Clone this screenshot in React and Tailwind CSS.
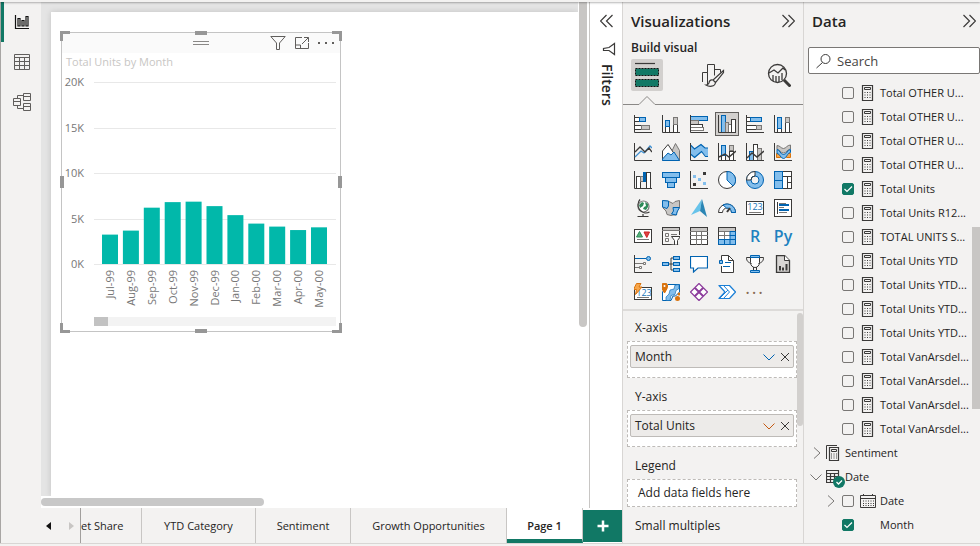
import React from "react";

const DARK = "#3b3a39";
const BLUE = "#0063b1";
const SKY = "#83beec";
const GRAY = "#797775";
const SILVER = "#c8c6c4";

function Icon({ children, size = "size-[18px]", box = "0 0 18 18" }) {
  return (
    <svg className={`${size} shrink-0`} viewBox={box} fill="none" stroke={DARK} strokeWidth="1" aria-hidden="true">
      {children}
    </svg>
  );
}

function Box({ x, y, w, h, f = "#fff", s = DARK }) {
  return <rect x={x + 0.5} y={y + 0.5} width={w} height={h} fill={f} stroke={s} />;
}

const Axis = () => <path d="M.5 0V17.5H18" />;

const visuals = [
  ["Stacked bar chart", <><Axis /><Box x={0} y={2} w={5} h={4} /><Box x={5} y={2} w={6} h={4} f={SKY} s={BLUE} /><Box x={0} y={10} w={7} h={4} /><Box x={7} y={10} w={8} h={4} f={SILVER} s={GRAY} /></>],
  ["Stacked column chart", <><Axis /><Box x={3} y={11} w={4} h={6} /><Box x={3} y={5} w={4} h={6} f={SKY} s={BLUE} /><Box x={11} y={7} w={4} h={10} /><Box x={11} y={2} w={4} h={7} f={SILVER} s={GRAY} /></>],
  ["Clustered bar chart", <><Box x={0} y={1} w={17} h={4} f={SKY} s={BLUE} /><Box x={0} y={5} w={8} h={4} f={SILVER} s={GRAY} /><Box x={0} y={9} w={12} h={3} /><Box x={0} y={12} w={13} h={3} s={GRAY} /><Axis /></>],
  ["Clustered column chart", <><Box x={3} y={0} w={4} h={17} f={SKY} s={BLUE} /><Box x={7} y={7} w={3} h={10} f={SILVER} s={GRAY} /><Box x={10} y={9} w={3} h={8} s={GRAY} /><Box x={13} y={4} w={4} h={13} /><Axis /></>],
  ["100% stacked bar chart", <><Axis /><Box x={0} y={2} w={4} h={4} /><Box x={4} y={2} w={11} h={4} f={SKY} s={BLUE} /><Box x={0} y={10} w={10} h={4} /><Box x={10} y={10} w={5} h={4} f={SILVER} s={GRAY} /></>],
  ["100% stacked column chart", <><Axis /><Box x={3} y={13} w={4} h={4} /><Box x={3} y={2} w={4} h={11} f={SKY} s={BLUE} /><Box x={11} y={7} w={4} h={10} /><Box x={11} y={2} w={4} h={5} f={SILVER} s={GRAY} /></>],
  ["Line chart", <><Axis /><path d="M1 14l6-6 3 2 6-7 2 2" stroke="#3f8fd0" strokeWidth="1.300" /><path d="M1 9l5-5 5 5 4-4 3 4" strokeWidth="1.300" /></>],
  ["Area chart", <><path d="M9 10l4.500-9.500 4 7v10z" fill={SILVER} stroke={GRAY} /><path d="M.5 17.500V8L6 1.500l6 9" fill="#fff" /><path d="M.5 17.500V16L6 10l3 2 3-3 5.500 8.500z" fill={SKY} stroke={BLUE} /></>],
  ["Stacked area chart", <><path d="M.5 2.500L4 6l7-5 4 4h3v8h-2l-4-4-7 6-4.500-4z" fill={SKY} stroke="none" /><path d="M.5 2l4 4L11 1.500l4 3.500h3M.5 11l4 3.500 7-6 4 5H18" stroke={BLUE} strokeWidth="1.200" /><Axis /></>],
  ["Line and stacked column chart", <><Axis /><Box x={3} y={10} w={4} h={7} /><Box x={3} y={2} w={4} h={10} f={SKY} s={BLUE} /><Box x={11} y={8} w={4} h={9} /><Box x={11} y={2} w={4} h={5} f={SILVER} s={GRAY} /><path d="M1 14l6-3 4 3 7-6" strokeWidth="1.400" /></>],
  ["Line and clustered column chart", <><Box x={3} y={8} w={4} h={9} f={SKY} s={BLUE} /><Box x={7} y={1} w={4} h={16} /><Box x={11} y={5} w={4} h={12} f={SILVER} s={GRAY} /><Axis /><path d="M1 15l5-5 5 4 7-6" strokeWidth="1.400" /></>],
  ["Ribbon chart", <><path d="M3 2.500c3 0 4 3 6.500 3S13 2 16.500 2v4c-3 0-4 4-7 4S6 6.500 3 6.500z" fill={SILVER} stroke={GRAY} /><path d="M2.500 10.500h4v4h-4zM12.500 10.500h4v4h-4z" fill="#f7a64a" stroke="#d9730d" /><path d="M3 6.500c3 0 3 5 6.500 5s4-5 7-5v3c-3 0-4 6-7 6s-3.500-5-6.500-5z" fill={SKY} stroke={BLUE} /><Axis /></>],
  ["Waterfall chart", <><Box x={2} y={5} w={4} h={12} /><Box x={6} y={5} w={3} h={5} f={SILVER} s={GRAY} /><Box x={9} y={1} w={2} h={9} f={BLUE} s={BLUE} /><Box x={12} y={1} w={4} h={16} /><Axis /></>],
  ["Funnel chart", <><Box x={0} y={1} w={17} h={5} f={SKY} s={BLUE} /><Box x={3} y={6} w={11} h={5} f={SKY} s={BLUE} /><Box x={5} y={11} w={7} h={5} f={SKY} s={BLUE} /></>],
  ["Scatter chart", <><Axis /><g stroke="none"><path d="M13 1h3v3h-3zM3 12h3v3H3z" fill={DARK} /><path d="M3 4h3v3H3zM8 7h3v3H8zM13 11h3v3h-3z" fill={SKY} /></g></>],
  ["Pie chart", <><circle cx="9" cy="9" r="8.500" fill="#fff" /><path d="M9 9V.5a8.500 8.500 0 016 14.500z" fill={SKY} stroke={BLUE} /></>],
  ["Donut chart", <><circle cx="9" cy="9" r="8.500" fill={SKY} stroke={BLUE} /><path d="M.5 9A8.500 8.500 0 019 .5V9z" fill="#fff" /><circle cx="9" cy="9" r="4" fill="#f3f2f1" stroke={BLUE} /><path d="M5 9a4 4 0 014-4" /></>],
  ["Treemap", <><Box x={8} y={0} w={9} h={5} /><Box x={8} y={5} w={5} h={12} /><Box x={13} y={5} w={4} h={6} /><Box x={13} y={11} w={4} h={6} /><Box x={0} y={0} w={8} h={9} f={SKY} s={BLUE} /><Box x={0} y={9} w={8} h={8} f={SKY} s={BLUE} /></>],
  ["Map", <><circle cx="9.500" cy="7.500" r="5.500" fill="#fff" stroke={GRAY} strokeWidth="1.200" /><path d="M5 6l3-3 2 1-1 3-3 2zM11 3l3 2v3l-2 3-3-1 1-2 2-1z" fill="#2d8a57" stroke="none" /><path d="M6 .5a8 8 0 009.500 12.500M9 15V17M3.500 17.500h11" strokeWidth="1.200" /></>],
  ["Filled map", <><path d="M1 1.500l6 1 4 2 2-2 4.500-1v7l-2 3-1.500 4.500h-3l-2 .5-4-1-1-3.500-3-3z" fill={SILVER} stroke={GRAY} /><path d="M.5 1.500L6.500 2v5L5 9.500.5 8zM11 8.500h6.500L15 13l-.5 3-5-1 2-3z" fill={SKY} stroke={BLUE} /></>],
  ["Azure map", <g stroke="none"><path d="M12 0L1 16l9-4z" fill="#67c3ea" /><path d="M12 0l5 18-7-6z" fill="#2b86b5" /></g>],
  ["Gauge", <><path d="M.5 13.500a8.500 8.500 0 0117 0h-4a4.500 4.500 0 00-9 0z" fill="#fff" /><path d="M5 6a8.500 8.500 0 0112.500 7.500h-4a4.500 4.500 0 00-5-4.500z" fill={SKY} stroke={BLUE} /><path d="M9 13l3-4" strokeWidth="2" /></>],
  ["Card", <><Box x={0} y={2} w={17} h={13} /><text x="9" y="11" fontSize="9" textAnchor="middle" fill="#1976b9" stroke="none">123</text><path d="M3 13.500h12" stroke={GRAY} /></>],
  ["Multi-row card", <><Box x={0} y={0} w={17} h={17} /><path d="M3.500 3v12" /><path d="M5 4.500h7M5 8.500h5M5 13.500h8" stroke={GRAY} /><path d="M5 6h10M5 11h10" stroke={BLUE} strokeWidth="2" /></>],
  ["KPI", <><Box x={0} y={2} w={17} h={13} /><path d="M2.500 10l3-5.500 3 5.500z" fill="#58b27a" stroke="#2d8a57" /><path d="M10 5h5.500l-2.700 5.500z" fill="#e04343" stroke="#c22" /><path d="M3 12.500h12" stroke={GRAY} /></>],
  ["Slicer", <><Box x={0} y={0} w={17} h={17} f="#f8f7f6" /><path d="M1 2h16" stroke={SILVER} strokeWidth="2" /><path d="M0 3.500h18" stroke={GRAY} /><path d="M3.500 6.500h3v3h-3zM3.500 11.500h3v3h-3zM9 7.500h6" stroke={GRAY} /><path d="M8 17V8h10v10z" fill="#f3f2f1" stroke="none" /><path d="M9.500 9.500h9l-3 4v4.500h-3V13.500z" fill="#fff" /></>],
  ["Table", <><Box x={0} y={0} w={17} h={17} /><path d="M1 2.500h16" stroke={SILVER} strokeWidth="3" /><path d="M0 4.500h18M0 8.500h18M0 12.500h18M6.500 4v14M11.500 4v14" stroke={GRAY} /></>],
  ["Matrix", <><Box x={0} y={0} w={17} h={17} /><path d="M1 2.500h16" stroke={SILVER} strokeWidth="3" /><path d="M1 4.500h16M1 8.500h11M6.500 4v9" stroke={GRAY} /><path d="M12 4.500h5.500v13H.5v-5h11.500z" fill={SKY} stroke={BLUE} /><path d="M6.500 13v5M12 13v5M12 8.500h6M12 12.500h6" stroke={BLUE} /><path d="M.5 0V12M0 .5h18M17.500 0v4" /></>],
  ["R script visual", "R"],
  ["Python visual", "Py"],
  ["Key influencers", <><Axis /><path d="M1 3.500h11" stroke={BLUE} /><circle cx="14.500" cy="3.500" r="2" fill={SKY} stroke={BLUE} /><path d="M1 8.500h8M1 12.500h4" stroke={GRAY} /><path d="M9.500 7.500h2v2h-2zM5.500 11.500h2v2h-2z" fill="#fff" stroke={GRAY} /></>],
  ["Decomposition tree", <><path d="M6 9h6M12 3H9v12h3" /><Box x={0} y={7} w={6} h={3} f={SKY} s={BLUE} /><Box x={11} y={1} w={6} h={3} f={SKY} s={BLUE} /><Box x={11} y={7} w={6} h={3} f={SKY} s={BLUE} /><Box x={11} y={13} w={6} h={3} f={SKY} s={BLUE} /></>],
  ["Q&A", <path d="M.5 1.500h17v11.500H8l-4.500 4V13H.5z" fill="#fff" stroke={BLUE} strokeWidth="1.200" />],
  ["Smart narrative", <><path d="M3.500 5V.5h7l5 5v12h-12V11" fill="#fff" /><path d="M10.500.5v5h5" /><path d="M1.500 5.500h3v3h-3z" fill={SKY} stroke={BLUE} /><path d="M7 7.500h6M5 11.500h7" stroke={BLUE} /></>],
  ["Goals", <><path d="M4.500 1.500h9v6a4.500 5 0 01-9 0z" fill="#fff" /><path d="M4.500 2.500h-4c0 4 2 5 5 6M13.500 2.500h4c0 4-2 5-5 6M7.500 12v3.500M10.500 12v3.500" /><path d="M4.500.5h9v2h-9zM4.500 15.500h9v2h-9z" fill={SKY} stroke={BLUE} /></>],
  ["Paginated report", <><path d="M2.500.5h8l5 5v12h-13z" fill="#d8d6d4" strokeWidth="1.300" /><path d="M10.500.5v5h5" fill="#fff" /><path d="M6 15.500V11M9 15.500v-3M12.500 15.500V9" strokeWidth="2" /></>],
  ["Card (new)", <><Box x={0} y={4} w={17} h={12} /><text x="10" y="13" fontSize="9" textAnchor="middle" fill="#1976b9" stroke="none">123</text><path d="M3 14.500h12" stroke={GRAY} /><path d="M2.500.5h4.500l-2 3.500h3l-6.500 7.500 1-5H-.5z" fill="#f7a64a" stroke="#d9730d" /></>],
  ["ArcGIS Maps", <><path d="M6 1.500h11.500V9l-4 4H11l-2 4.500H.5V9z" fill="#fff" stroke={BLUE} /><path d="M17 1.500v4l-3 2-1 4-4 1-1 5H4V14l3-3 1-4 4-1 1-4z" fill={SKY} stroke={BLUE} strokeWidth=".6" /><path d="M2.500 10C0 6-.5 5-.5 3a3 3 0 016 0c0 2-.5 3-3 7z" fill="#d9730d" stroke="#d9730d" /><circle cx="2.500" cy="3" r="1" fill="#fff" stroke="none" /><circle cx="15.500" cy="15.500" r="2.500" fill="#d9730d" stroke="none" /><circle cx="17" cy="11" r="1.500" fill="#d9730d" stroke="none" /></>],
  ["Power Apps", <g stroke="#8c3c9c" fill="#fff" strokeLinejoin="round"><path d="M9 .5L13 4.500 9 8.500 5 4.500zM4.500 5L8.500 9l-4 4-4-4zM13.500 5l4 4-4 4-4-4zM9 9.500l4 4-4 4-4-4z" strokeWidth="1.200" /></g>],
  ["Power Automate", <g stroke="#1b7fd6" strokeLinejoin="round"><path d="M1 2.500h10.500L17.500 9l-6 6.500H1L7 9z" fill="#fff" strokeWidth="1.200" /><path d="M5.500 2.500l6 6.500-6 6.500M10 7l-8 8" /></g>],
  ["Get more visuals", "..."],
];

const months = [
  ["Jul-99", 3230], ["Aug-99", 3670], ["Sep-99", 6190], ["Oct-99", 6800],
  ["Nov-99", 6850], ["Dec-99", 6360], ["Jan-00", 5370], ["Feb-00", 4440],
  ["Mar-00", 4110], ["Apr-00", 3730], ["May-00", 4030],
];

function Chart() {
  const top = 12;
  const base = 194;
  const y = (v) => base - (v / 20000) * (base - top);
  return (
    <svg className="block w-full" viewBox="0 0 278 261" role="img" aria-label="Total Units by Month">
      {[0, 5, 10, 15, 20].map((k) => (
        <g key={k}>
          <path d={`M32 ${Math.round(y(k * 1000)) + 0.5}H274`} stroke="#e8e8e8" />
          <text x="22" y={Math.round(y(k * 1000)) + 4} textAnchor="end" fontSize="11" fill="#777">{k}K</text>
        </g>
      ))}
      {months.map(([name, v], i) => {
        const x = 40 + i * 20.9;
        return (
          <g key={name}>
            <rect x={x} y={y(v)} width="16" height={base - y(v)} fill="#01b8aa" />
            <text transform={`translate(${x + 12} 200) rotate(-90)`} textAnchor="end" fontSize="11" fill="#777">{name}</text>
          </g>
        );
      })}
      <rect x="32" y="247" width="242" height="9" fill="#f3f3f3" />
      <rect x="32" y="247" width="14" height="9" fill="#c2c2c2" />
    </svg>
  );
}

function Chevrons({ flip }) {
  return (
    <Icon size="size-[14px]" box="0 0 14 14">
      <path d={flip ? "M6.500 1L.5 7l6 6M12.500 1l-6 6 6 6" : "M1.500 1l6 6-6 6M7.500 1l6 6-6 6"} strokeWidth="1.200" />
    </Icon>
  );
}

function Tick({ label, checked }) {
  return (
    <span className="relative size-3 shrink-0">
      <input type="checkbox" aria-label={label} defaultChecked={checked} className="peer block size-3 appearance-none rounded-xs border border-[#797775] checked:border-[#117865] checked:bg-[#117865]" />
      <svg className="pointer-events-none absolute inset-0 hidden size-3 peer-checked:block" viewBox="0 0 12 12" fill="none" stroke="#fff" strokeWidth="1.200" aria-hidden="true">
        <path d="M2.500 6l2.500 2.500L10 3.500" />
      </svg>
    </span>
  );
}

function Calc({ stacked }) {
  return (
    <Icon size="h-4 w-[14px]" box="0 0 14 16">
      {stacked && <path d="M.5 14V.5H11" />}
      <path d={stacked ? "M3.500 2.500h9v13h-9z" : "M2.500.5h10v15h-10z"} fill="#f3f2f1" strokeWidth="1.200" />
      <path d={stacked ? "M5.500 4.500h5v2h-5z" : "M4.500 2.500h6v2h-6z"} />
      <path d={stacked ? "M5 9h7M5 11h7M5 13h7" : "M4.500 7.500h7M4.500 10h7M4.500 12.500h7"} strokeDasharray="1 1.500" />
    </Icon>
  );
}

const fields = [
  "Total OTHER U...", "Total OTHER U...", "Total OTHER U...", "Total OTHER U...",
  "Total Units", "Total Units R12...", "TOTAL UNITS S...", "Total Units YTD",
  "Total Units YTD...", "Total Units YTD...", "Total Units YTD...",
  "Total VanArsdel...", "Total VanArsdel...", "Total VanArsdel...", "Total VanArsdel...",
];

function Well({ label, value, tone }) {
  return (
    <section>
      <h3 className="flex h-[27px] items-center pl-2">{label}</h3>
      <div className="h-[37px] border border-dashed border-[#bebbb8] bg-white px-0.5 pt-[3px]">
        <div className="flex h-[23px] items-center rounded-xs border border-[#bebbb8] bg-[#edebe9] pl-1">
          <span className="flex-1">{value}</span>
          <button type="button" aria-label={`${value} options`} className="mr-1">
            <Icon size="h-3 w-3" box="0 0 12 12"><path d="M.5 3.500L6 9l5.500-5.500" stroke={tone} /></Icon>
          </button>
          <button type="button" aria-label={`Remove ${value}`} className="mr-0.5">
            <Icon size="h-3 w-3" box="0 0 12 12"><path d="M2 2l8 8M10 2l-8 8" /></Icon>
          </button>
        </div>
      </div>
    </section>
  );
}

const handles = [
  "-left-0.5 -top-0.5 size-[10px] border-l-[3px] border-t-[3px]",
  "-right-0.5 -top-0.5 size-[10px] border-r-[3px] border-t-[3px]",
  "-left-0.5 -bottom-0.5 size-[10px] border-b-[3px] border-l-[3px]",
  "-right-0.5 -bottom-0.5 size-[10px] border-b-[3px] border-r-[3px]",
  "left-1/2 -top-0.5 w-3 -translate-x-1/2 border-t-4",
  "left-1/2 -bottom-0.5 w-3 -translate-x-1/2 border-t-4",
  "top-1/2 -left-0.5 h-3 -translate-y-1/2 border-l-4",
  "top-1/2 -right-0.5 h-3 -translate-y-1/2 border-l-4",
];

export default function App() {
  return (
    <div className="flex h-screen flex-col overflow-hidden bg-[#f3f2f1] font-['Open_Sans','Noto_Sans',sans-serif] text-[12px] leading-4 text-[#252423]">
      <div className="z-10 h-0.5 shrink-0 bg-[#f3f2f1] shadow-[0_1px_2px_rgba(0,0,0,0.3)]" />
      <div className="mb-0.5 flex min-h-0 flex-1 border-b border-[#d8d6d4]">
        <nav aria-label="Views" className="flex w-[41px] shrink-0 flex-col border-l border-[#a8a6a4]">
          <button type="button" aria-label="Report view" className="flex h-10 items-center justify-center border-l-[3px] border-[#117865] pr-0.5">
            <Icon size="size-4" box="0 0 16 16"><path d="M1.500 1v13.500H15M4 4.500h2v7.500H4zM8 6.500h2V12H8zM12 2.500h2V12h-2z" stroke="#111" strokeWidth="1.200" /></Icon>
          </button>
          <button type="button" aria-label="Table view" className="flex h-10 items-center justify-center pl-0.5">
            <Icon size="size-4" box="0 0 16 16"><path d="M.5.5h15v15H.5zM.5 3.500h15M.5 7.500h15M.5 11.500h15M5.500 3.500v12M10.500 3.500v12" stroke="#605e5c" /></Icon>
          </button>
          <button type="button" aria-label="Model view" className="flex h-10 items-center justify-center pl-0.5">
            <Icon><path d="M.5 5.500h7v7h-7zM.5 8.500h7M10.500.5h7v7h-7zM10.500 3.500h7M10.500 10.500h7v7h-7zM10.500 13.500h7M4.500 5.500v-3h6M4.500 12.500v3h6" stroke="#605e5c" /></Icon>
          </button>
        </nav>

        <div className="flex min-w-0 flex-1 flex-col">
          <div className="flex min-h-0 flex-1">
            <main className="flex min-w-0 flex-1 flex-col bg-white">
              <div className="flex min-h-0 flex-1">
                <div className="min-w-0 flex-1 overflow-hidden bg-[#e4e4e4] pl-[10px] pt-[10px]">
                  <div className="h-full bg-white pl-[10px] pt-5 shadow-[0_0_6px_rgba(0,0,0,0.15)]">
                    <article className="relative w-[280px] border border-[#c4c4c4]">
                      {handles.map((h) => (
                        <span key={h} className={`absolute border-[#979797] ${h}`} />
                      ))}
                      <header className="grid h-5 grid-cols-3 items-center bg-[#fafafa]">
                        <span />
                        <span className="h-1 w-4 justify-self-center border-y border-[#8a8886]" />
                        <span className="flex items-center justify-end gap-2 pr-[6px]">
                          <button type="button" aria-label="Filters on this visual">
                            <Icon size="size-4" box="0 0 16 16"><path d="M.8 1.500h14.400L9.500 8v6.500h-3V8z" stroke="#605e5c" /></Icon>
                          </button>
                          <button type="button" aria-label="Focus mode">
                            <Icon size="h-4 w-4" box="0 0 16 16"><path d="M8 2.500H1.500v11h13V8M10 2.500h4.500V7M8 9l6.500-6.500M1.500 10h5v3.500" stroke="#605e5c" /></Icon>
                          </button>
                          <button type="button" aria-label="More options">
                            <Icon size="h-4 w-4" box="0 0 16 16"><path d="M0 7h2v2H0zM7 7h2v2H7zM14 7h2v2h-2z" fill="#605e5c" stroke="none" /></Icon>
                          </button>
                        </span>
                      </header>
                      <h2 className="h-[17px] pl-1 text-[11px] leading-[17px] text-[#c8c6c4]">Total Units by Month</h2>
                      <Chart />
                    </article>
                  </div>
                </div>
                <div className="w-[11px] shrink-0 bg-white pl-px">
                  <div className="h-[325px] w-2 rounded-b-full bg-[#c8c6c4]" />
                </div>
              </div>
              <div className="h-3 shrink-0 pt-0.5">
                <div className="h-2 w-[223px] rounded-full bg-[#c8c8c8]" />
              </div>
            </main>
            <aside aria-label="Filters" className="flex w-[33px] shrink-0 flex-col items-center border-l border-[#c8c6c4] bg-white pt-3 pl-px">
              <button type="button" aria-label="Expand filters"><Chevrons flip /></button>
              <span className="mt-3.5 ml-1"><Icon size="size-[14px]" box="0 0 14 14"><path d="M12.500 1.500v11L7 8.500H1.500v-2L7 5.500z" strokeWidth="1.200" /></Icon></span>
              <h2 className="mt-2 text-[14px] font-semibold [writing-mode:vertical-rl]">Filters</h2>
            </aside>
          </div>
          <div className="flex h-[35px] shrink-0 text-[11px]">
            <div className="flex w-10 shrink-0 items-center justify-between border-r border-[#a19f9d] pr-1.5 pl-[5px]">
              <button type="button" aria-label="Previous page"><Icon size="h-2 w-[5px]" box="0 0 5 8"><path d="M5 0v8L0 4z" fill="#111" stroke="none" /></Icon></button>
              <button type="button" aria-label="Next page"><Icon size="h-2 w-[5px]" box="0 0 5 8"><path d="M0 0v8l5-4z" fill="#c8c6c4" stroke="none" /></Icon></button>
            </div>
            <button type="button" className="w-[61px] border-r border-[#c8c6c4] pr-[18px] text-right whitespace-nowrap">et Share</button>
            <button type="button" className="w-[114px] border-r border-[#c8c6c4]">YTD Category</button>
            <button type="button" className="w-[95px] border-r border-[#c8c6c4]">Sentiment</button>
            <button type="button" className="w-[156px] border-r border-[#c8c6c4]">Growth Opportunities</button>
            <button type="button" className="w-[76px] border-r border-b-4 border-r-[#c8c6c4] border-b-[#117865] bg-white pt-1 font-semibold">Page 1</button>
            <div className="flex flex-1 bg-white pt-0.5 pb-px">
              <button type="button" aria-label="New page" className="flex flex-1 items-center justify-center bg-[#117865]">
                <Icon size="size-3" box="0 0 12 12"><path d="M6 .5v11M.5 6h11" stroke="#fff" strokeWidth="2.500" /></Icon>
              </button>
            </div>
          </div>
        </div>

        <aside aria-label="Visualizations" className="flex w-[182px] shrink-0 flex-col border-x border-[#d8d6d4]">
          <header className="flex h-[38px] items-center justify-between pr-2 pl-2">
            <h2 className="text-[15px] leading-5 font-semibold">Visualizations</h2>
            <button type="button" aria-label="Collapse visualizations"><Chevrons /></button>
          </header>
          <h3 className="pl-2 text-[12px] font-semibold">Build visual</h3>
          <div className="mt-[3px] flex h-8 justify-between pr-2 pl-2">
            <button type="button" aria-label="Build visual" className="flex size-8 items-center justify-center rounded-xs bg-[#d2d0ce]">
              <Icon size="size-7" box="0 0 28 28">
                <path d="M2 2.500h20" strokeWidth="1.200" />
                <path d="M2.500 7.500h23v7h-23zM2.500 18.500h23v7h-23z" fill="#117865" stroke="#111" strokeDasharray="2 1" />
              </Icon>
            </button>
            <button type="button" aria-label="Format visual" className="flex size-8 items-center justify-center">
              <Icon size="size-6" box="0 0 24 24">
                <path d="M1.500 19V9.500h5V21M6.500 9.500v-8h7v11M13.500 6.500h6v3M6.500 9.500V18" />
                <path d="M22.500 7.500L12 17l2.500 2.500 8-10zM12 17c-3-1-4 2-4 3-1 2-2 2-3 2 3 2 9 2 9.500-2.500" fill="#f3f2f1" strokeWidth="1.200" />
              </Icon>
            </button>
            <button type="button" aria-label="Analytics" className="flex size-8 items-center justify-center">
              <Icon size="size-6" box="0 0 24 24">
                <circle cx="10.500" cy="10.500" r="9" strokeWidth="1.300" />
                <path d="M2 10l5-3 4 3 5-5 2 2M6 18v-6M9 19v-6M12 19v-6M15 17v-7" strokeWidth="1.300" />
                <path d="M17 17l6.500 6.500" strokeWidth="3" />
              </Icon>
            </button>
          </div>
          <div className="mt-1 flex h-[10px]">
            <span className="w-4 border-b border-[#8a8886]" />
            <Icon size="h-[10px] w-4" box="0 0 16 10"><path d="M0 9.500L8 1.500l8 8" stroke="#8a8886" /></Icon>
            <span className="flex-1 border-b border-[#8a8886]" />
          </div>
          <div className="mt-[5px] mb-[3px] grid grid-cols-[repeat(6,28px)] auto-rows-[28px] pl-[6px]">
            {visuals.map(([name, art], i) => (
              <button key={name} type="button" aria-label={name} className="flex items-center justify-center">
                {typeof art === "string" ? (
                  <span className={art === "..." ? "text-[18px] tracking-widest text-[#8a6d55]" : "text-[16px] font-semibold text-[#1f82c0]"}>{art === "..." ? "···" : art}</span>
                ) : (
                  <span className={i === 3 ? "flex size-6 items-center justify-center border border-[#605e5c] bg-[#d2d0ce]" : "flex"}>
                    <Icon>{art}</Icon>
                  </span>
                )}
              </button>
            ))}
          </div>
          <div className="flex min-h-0 flex-1 overflow-hidden border-t-2 border-[#dddbd9] pl-1">
            <div className="flex min-w-0 flex-1 flex-col gap-[5px] pt-[3px]">
              <Well label="X-axis" value="Month" tone="#0063b1" />
              <Well label="Y-axis" value="Total Units" tone="#c55a11" />
              <section>
                <h3 className="flex h-[27px] items-center pl-2">Legend</h3>
                <div className="flex h-7 items-center border border-dashed border-[#bebbb8] bg-white pl-[10px]">Add data fields here</div>
              </section>
              <h3 className="flex h-[27px] items-center pl-2">Small multiples</h3>
            </div>
            <div className="mt-0.5 h-[113px] w-[6px] shrink-0 rounded-full bg-[#d2d0ce]" />
          </div>
        </aside>

        <aside aria-label="Data" className="flex w-44 shrink-0 flex-col">
          <header className="flex h-[38px] items-center justify-between pr-1 pl-2">
            <h2 className="text-[15px] leading-5 font-semibold">Data</h2>
            <button type="button" aria-label="Collapse data"><Chevrons /></button>
          </header>
          <label className="mt-[7px] ml-1 flex h-[27px] shrink-0 items-center gap-[5px] rounded-xs border border-[#797775] bg-white pl-[7px]">
            <Icon size="size-4" box="0 0 16 16"><circle cx="9.500" cy="6" r="4.500" /><path d="M6.500 9.500L.5 15" /></Icon>
            <input type="search" aria-label="Search" placeholder="Search" className="w-full min-w-0 bg-transparent text-[13px] outline-none placeholder:text-[#484644]" />
          </label>
          <div className="flex min-h-0 flex-1 overflow-hidden pt-[7px]">
            <ul className="min-w-0 flex-1 text-[11px] whitespace-nowrap">
              {fields.map((f, i) => (
                <li key={i} className="flex h-6 items-center gap-[6px] pl-[38px]">
                  <Tick label={f} checked={f === "Total Units"} />
                  <Calc />
                  <span>{f}</span>
                </li>
              ))}
              <li className="flex h-6 items-center gap-1 pl-2">
                <Icon size="h-3 w-[10px]" box="0 0 10 12"><path d="M2 .5L8 6l-6 5.500" stroke="#797775" /></Icon>
                <Calc stacked />
                <span className="pl-px">Sentiment</span>
              </li>
              <li className="flex h-6 items-center gap-1 pl-[6px]">
                <Icon size="h-3 w-3" box="0 0 12 12"><path d="M.5 3.500L6 9l5.500-5.500" stroke="#797775" /></Icon>
                <span className="relative">
                  <Icon size="size-[14px]" box="0 0 14 14"><path d="M.5.5h12v12H.5zM.5 3.500h12M.5 6.500h12M.5 9.500h12M4.500 3v10M8.500 3v10" strokeWidth="1.200" /></Icon>
                  <svg className="absolute top-[6px] left-[7px] size-3" viewBox="0 0 12 12" fill="none" aria-hidden="true"><circle cx="6" cy="6" r="6" fill="#117865" /><path d="M3.500 6l2 2 3.500-3.500" stroke="#fff" strokeWidth="1.300" /></svg>
                </span>
                <span className="pl-px">Date</span>
              </li>
              <li className="flex h-6 items-center gap-[6px] pl-[22px]">
                <Icon size="h-3 w-[10px]" box="0 0 10 12"><path d="M2 .5L8 6l-6 5.500" stroke="#797775" /></Icon>
                <Tick label="Date" />
                <span className="flex items-center gap-1">
                  <Icon size="h-4 w-4" box="0 0 16 16"><path d="M.5 2.500h15v12H.5zM.5 5.500h15M3.500 1v2M12.500 1v2" /><path d="M3 8h11M3 10.500h11M3 12.500h11" strokeDasharray="1 1.500" /></Icon>
                  <span>Date</span>
                </span>
              </li>
              <li className="flex h-6 items-center gap-[26px] pl-[38px]">
                <Tick label="Month" checked />
                <span>Month</span>
              </li>
            </ul>
            <div className="mt-[146px] h-[182px] w-2 shrink-0 bg-[#c8c6c4]" />
          </div>
        </aside>
      </div>
    </div>
  );
}
